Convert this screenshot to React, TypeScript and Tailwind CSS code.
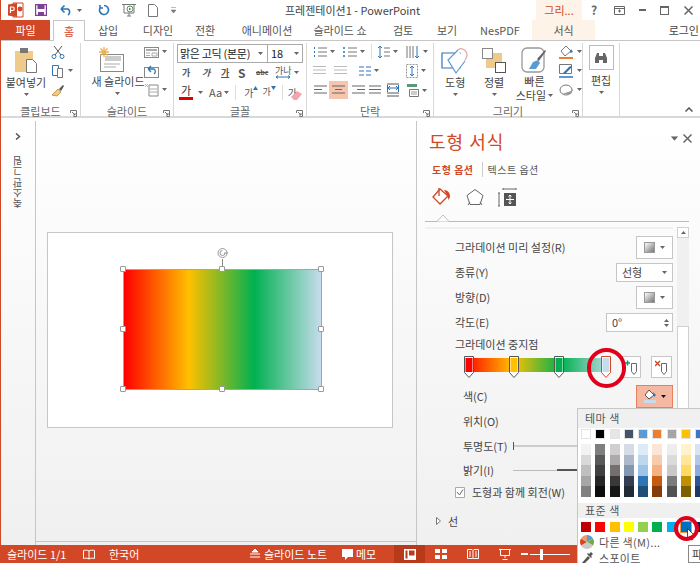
import type { ReactNode } from "react";

const Caret = ({ className = "", color = "#666" }: { className?: string; color?: string }) => (
  <svg width="5" height="3" viewBox="0 0 5 3" className={className}>
    <path d="M0 0h5L2.5 3z" fill={color} />
  </svg>
);

const Launcher = () => (
  <svg width="7" height="7" viewBox="0 0 7 7" className="absolute right-[3px] bottom-[1px]">
    <path d="M.5 3V.5H6.5V6.5H3.500M2 2l3 3M5 3v2H3" fill="none" stroke="#777" />
  </svg>
);

const Group = ({ label, width, children }: { label: string; width: string; children: ReactNode }) => (
  <div className={`relative flex flex-col h-[75px] border-r border-[#d8d8d8] ${width}`}>
    <div className="flex-1 min-h-0 flex">{children}</div>
    <div className="h-[14px] leading-[14px] text-center text-[11px] text-[#666]">{label}</div>
    <Launcher />
  </div>
);

const Lines = ({ w = 12, n = 3, color = "#666" }: { w?: number; n?: number; color?: string }) => (
  <>
    {Array.from({ length: n }).map((_, i) => (
      <rect key={i} x={0} y={2 + i * 3.5} width={w} height="1" fill={color} />
    ))}
  </>
);

const Mini = ({ children, arrow = false, w = 14 }: { children: ReactNode; arrow?: boolean; w?: number }) => (
  <div className="flex items-center gap-[3px] h-[19px]">
    <svg width={w} height="14" viewBox={`0 0 ${w} 14`}>
      {children}
    </svg>
    {arrow && <Caret />}
  </div>
);

const TABS: [string, string][] = [
  ["삽입", "w-[50px]"],
  ["디자인", "w-[50px]"],
  ["전환", "w-[44px]"],
  ["애니메이션", "w-[80px]"],
  ["슬라이드 쇼", "w-[66px]"],
  ["검토", "w-[60px]"],
  ["보기", "w-[28px]"],
  ["NesPDF", "w-[78px]"],
];

const THEME = ["#ffffff", "#000000", "#e7e6e6", "#44546a", "#5b9bd5", "#ed7d31", "#a5a5a5", "#ffc000", "#4472c4"];
const RAMPS = [
  ["#f2f2f2", "#d9d9d9", "#bfbfbf", "#a6a6a6", "#808080"],
  ["#7f7f7f", "#595959", "#404040", "#262626", "#0d0d0d"],
  ["#d0cece", "#aeaaaa", "#757070", "#3a3838", "#171616"],
  ["#d6dce5", "#adb9ca", "#8497b0", "#333f50", "#222a35"],
  ["#deebf7", "#bdd7ee", "#9dc3e6", "#2e75b6", "#1f4e79"],
  ["#fbe5d6", "#f8cbad", "#f4b183", "#c55a11", "#843c0c"],
  ["#ededed", "#dbdbdb", "#c9c9c9", "#7b7b7b", "#525252"],
  ["#fff2cc", "#ffe699", "#ffd966", "#bf9000", "#7f6000"],
  ["#dae3f3", "#b4c7e7", "#8faadc", "#2f5597", "#203864"],
];
const STANDARD = ["#c00000", "#ff0000", "#ffc000", "#ffff00", "#92d050", "#00b050", "#00b0f0", "#0070c0", "#002060"];

const GradBtn = () => (
  <div className="w-[37px] h-[23px] bg-white border border-[#c6c6c6] flex items-center justify-center gap-[5px]">
    <div className="w-[11px] h-[11px] border border-[#999] bg-linear-to-br from-white to-[#777]" />
    <Caret />
  </div>
);

const Row = ({ label, h, pl = "pl-[30px]", children }: { label: string; h: string; pl?: string; children?: ReactNode }) => (
  <div className={`flex items-center justify-between ${pl} ${h}`}>
    <span className="text-[11px] text-[#444] whitespace-nowrap">{label}</span>
    {children}
  </div>
);

const Stop = ({ left, fill, selected = false }: { left: string; fill: string; selected?: boolean }) => (
  <svg width="12" height="24" viewBox="0 0 12 24" className={`absolute top-[-3px] ${left}`}>
    <path d="M1.5 1.5H10.5V17.5L6 22.5L1.5 17.5Z" fill="#fff" stroke={selected ? "#d24726" : "#555"} />
    <rect x="2.500" y="3" width="7" height="14" fill={fill} />
  </svg>
);

export default function App() {
  return (
    <div className="relative w-[700px] h-[563px] overflow-hidden bg-white border-l border-[#d24726] font-['Noto_Sans_CJK_KR','Liberation_Sans',sans-serif] text-[#444] flex flex-col">
      {/* Title bar */}
      <div className="h-[20px] flex items-center relative shrink-0">
        <svg width="16" height="16" viewBox="0 0 16 16" className="ml-[7px]">
          <path d="M5 1h10v14H5z" fill="#fff" stroke="#d24726" />
          <path d="M0 2.500 9 1v14L0 13.500z" fill="#d24726" />
          <circle cx="12" cy="7" r="2.400" fill="#d24726" />
          <path d="M2.500 11V5h2a1.500 1.500 0 0 1 0 3.500h-2" fill="none" stroke="#fff" strokeWidth="1.200" />
        </svg>
        <svg width="12" height="12" viewBox="0 0 12 12" className="ml-[11px]">
          <path d="M.5.5h11v11H.5z" fill="#fff" stroke="#7d3f98" strokeWidth="1.400" />
          <path d="M2.500 1h7v4h-7zM3 8h6v3.500H3z" fill="#7d3f98" />
        </svg>
        <svg width="13" height="12" viewBox="0 0 13 12" className="ml-[13px]">
          <path d="M1 5 4.500 1.500M1 5l3.500 3.500M1 5h7a3.500 3.500 0 0 1 0 6" fill="none" stroke="#2e75b6" strokeWidth="1.600" />
        </svg>
        <Caret className="ml-[4px]" />
        <svg width="12" height="12" viewBox="0 0 12 12" className="ml-[16px]">
          <path d="M6 1.500a4.500 4.500 0 1 1-4 2.400M2 1v3h3" fill="none" stroke="#2e75b6" strokeWidth="1.600" />
        </svg>
        <svg width="14" height="14" viewBox="0 0 14 14" className="ml-[12px]">
          <path d="M0 1.500h14M2 1.500V10h10V1.500M5 13h4M7 10v3" fill="none" stroke="#777" />
          <circle cx="8" cy="6" r="3" fill="#fff" stroke="#5a8f5a" />
          <path d="M7 4.500v3l2.400-1.500z" fill="#5a8f5a" />
        </svg>
        <svg width="10" height="13" viewBox="0 0 10 13" className="ml-[12px]">
          <path d="M.5.5h6l3 3v9H.5z" fill="#fff" stroke="#777" />
        </svg>
        <svg width="5" height="6" viewBox="0 0 5 6" className="ml-[13px]">
          <path d="M0 .5h5M0 3h5L2.500 6z" fill="#777" stroke="#777" strokeWidth=".5" />
        </svg>
        <span className="ml-[109px] text-[11px] text-[#444] whitespace-nowrap">프레젠테이션1 - PowerPoint</span>
        <div className="ml-auto flex items-center h-full">
          <div className="w-[46px] h-full bg-[#fdf3e9] flex items-center justify-center text-[11px] text-[#d24726]">그리...</div>
          <div className="w-[24px] flex items-center justify-center text-[12px] font-bold text-[#666]">?</div>
          <svg width="11" height="9" viewBox="0 0 11 9" className="mr-[14px] ml-[8px]">
            <path d="M.5.5h10v8H.5zM.5 2.500h10M4 5h3M5.500 3.500v3" fill="none" stroke="#666" />
          </svg>
          <div className="w-[7px] h-[2px] bg-[#666] mr-[14px]" />
          <div className="w-[9px] h-[9px] border border-[#666] border-t-2 mr-[15px]" />
          <svg width="9" height="9" viewBox="0 0 9 9" className="mr-[7px]">
            <path d="M.5.5l8 8M8.500.5l-8 8" stroke="#666" strokeWidth="1.500" />
          </svg>
        </div>
      </div>

      {/* Tabs */}
      <div className="h-[21px] flex items-end shrink-0 relative border-b border-[#c6c6c6] text-[11px]">
        <div className="w-[49px] h-[20px] bg-[#d24726] text-white flex items-center justify-center">파일</div>
        <div className="ml-[3px] w-[32px] h-[21px] bg-white border border-b-0 border-[#c6c6c6] text-[#d24726] flex items-center justify-center mb-[-1px]">홈</div>
        <div className="flex items-center h-[20px] ml-[-2px]">
          {TABS.map(([t, w]) => (
            <div key={t} className={`${w} text-center whitespace-nowrap text-[#555]`}>{t}</div>
          ))}
        </div>
        <div className="w-[63px] h-[20px] bg-[#fdf3e9] flex items-center justify-center text-[#555] ml-[-7px]">서식</div>
        <span className="ml-auto mr-[1px] text-[#444] self-center whitespace-nowrap">로그인</span>
      </div>

      {/* Ribbon */}
      <div className="h-[77px] flex pt-[2px] shrink-0 border-b-2 border-[#d9d9d9] text-[11px] text-[#444]">
        <Group label="클립보드" width="w-[80px]">
          <div className="w-[50px] flex flex-col items-center pt-[5px]">
            <svg width="25" height="25" viewBox="0 0 25 25">
              <rect x="1" y="3" width="18" height="21" fill="#eecb8a" />
              <rect x="6" y="0" width="8" height="5" fill="#777" />
              <path d="M12.500 11.500h6l4 4v9h-10z" fill="#fff" stroke="#777" />
            </svg>
            <span className="leading-[13px] mt-[3px] whitespace-nowrap">붙여넣기</span>
            <Caret className="mt-[4px]" />
          </div>
          <div className="flex flex-col -mt-[1px]">
            <Mini>
              <path d="M3 1l7 9M11 1 4 10" stroke="#555" fill="none" />
              <circle cx="3" cy="11.500" r="2" fill="none" stroke="#2e75b6" />
              <circle cx="11" cy="11.500" r="2" fill="none" stroke="#2e75b6" />
            </Mini>
            <Mini arrow>
              <path d="M1.500 1.500h6v10h-6z" fill="#fff" stroke="#2e75b6" />
              <path d="M6.500 4.500h5v9h-5z" fill="#fff" stroke="#777" />
            </Mini>
            <Mini>
              <path d="M1 12 7 6l3 3-4 4z" fill="#eecb8a" stroke="#c79a45" />
              <path d="M8 6l4-4 1 1-3 5z" fill="#555" />
            </Mini>
          </div>
        </Group>

        <Group label="슬라이드" width="w-[93px]">
          <div className="w-[60px] flex flex-col items-center pt-[4px] shrink-0">
            <svg width="26" height="26" viewBox="0 0 26 26">
              <rect x="2.500" y="7.500" width="23" height="17" fill="#fff" stroke="#888" />
              <rect x="7" y="9" width="16" height="5" fill="#ccc" />
              <path d="M6 17h16M6 20h12" stroke="#aaa" />
              <path d="M6 0v10M1 5h10M2.500 1.500l7 7M9.500 1.500l-7 7" stroke="#edb04e" strokeWidth="1.300" />
            </svg>
            <span className="leading-[13px] mt-[2px] whitespace-nowrap ml-[14px]">새 슬라이드</span>
            <Caret className="mt-[4px] ml-[12px]" />
          </div>
          <div className="flex flex-col -mt-[1px] ml-[3px]">
            <Mini arrow w={15}>
              <rect x=".5" y="2.500" width="14" height="10" fill="#fff" stroke="#888" />
              <path d="M2 5h11" stroke="#aaa" strokeWidth="2" />
              <path d="M2 8h4M2 10.500h4M8 8h5v3H8z" stroke="#aaa" fill="none" />
            </Mini>
            <Mini w={15}>
              <rect x=".5" y="3.500" width="14" height="10" fill="#fff" stroke="#888" />
              <path d="M4 5H10a3 3 0 0 1 0 5M4 5l3-3M4 5l3 3" fill="none" stroke="#2e75b6" strokeWidth="1.300" />
            </Mini>
            <Mini arrow w={15}>
              <path d="M1 1l3 3M4 1 1 4" stroke="#edb04e" />
              <path d="M5 2h9v11H5z" fill="#fff" stroke="#888" />
              <path d="M6 6h7M6 9h7" stroke="#aaa" />
            </Mini>
          </div>
        </Group>

        <Group label="글꼴" width="w-[133px]">
          <div className="flex flex-col pl-[3px] pt-[1px]">
            <div className="flex h-[19px] w-[126px] border border-[#aaa] bg-white text-[#222]">
              <div className="w-[90px] flex items-center justify-between pl-[2px] pr-[4px] border-r border-[#aaa] whitespace-nowrap tracking-[-0.3px]">
                맑은 고딕 (본문)
                <Caret />
              </div>
              <div className="flex-1 flex items-center justify-between pl-[3px] pr-[3px]">
                18
                <Caret />
              </div>
            </div>
            <div className="flex items-center h-[19px] text-[9px] font-bold text-[#555] pl-[5px]">
              <span className="w-[20px]">가</span>
              <span className="w-[19px] italic">가</span>
              <span className="w-[17px] underline">가</span>
              <span className="w-[18px] text-[12px]">S</span>
              <span className="w-[19px] line-through text-[7px]">abc</span>
              <span className="text-[#555] font-normal leading-[9px] flex flex-col items-center">
                가나
                <svg width="14" height="4" viewBox="0 0 14 4">
                  <path d="M0 2h14M2 .5 0 2l2 1.500M12 .5 14 2l-2 1.500" fill="none" stroke="#2e75b6" />
                </svg>
              </span>
              <Caret className="ml-[2px]" />
            </div>
            <div className="flex items-center h-[20px] text-[11px] text-[#555]">
              <span className="w-[14px] ml-[2px] text-center border-b-[3px] border-[#e00000] leading-[13px] text-[#333]">가</span>
              <Caret className="ml-[5px]" />
              <span className="ml-[6px]">Aa</span>
              <Caret className="ml-[2px]" />
              <div className="w-px h-[15px] bg-[#ddd] ml-[6px]" />
              <span className="ml-[8px] text-[10px]">가</span>
              <svg width="5" height="4" viewBox="0 0 5 4" className="-mt-[9px]">
                <path d="M0 4 2.500 0 5 4z" fill="#2e75b6" />
              </svg>
              <span className="ml-[4px] text-[9px]">가</span>
              <svg width="5" height="4" viewBox="0 0 5 4" className="-mt-[9px]">
                <path d="M0 0h5L2.500 4z" fill="#2e75b6" />
              </svg>
              <div className="w-px h-[15px] bg-[#ddd] ml-[6px]" />
              <span className="ml-[5px] text-[10px]">가</span>
              <svg width="11" height="9" viewBox="0 0 11 9" className="-ml-[6px] mt-[6px]">
                <path d="M0 6 6 0l5 3-5 6H3z" fill="#f3a4ad" />
              </svg>
            </div>
          </div>
        </Group>

        <Group label="단락" width="w-[127px]">
          <div className="flex flex-col pl-[6px] w-full -mt-[1px]">
            <div className="flex items-center h-[19px]">
              <Mini arrow>
                <path d="M1 3h1M1 7h1M1 11h1" stroke="#2e75b6" strokeWidth="2" />
                <path d="M5 3h9M5 7h9M5 11h9" stroke="#777" />
              </Mini>
              <div className="ml-[8px]">
                <Mini arrow>
                  <path d="M1 2v2M1 6v2M1 10v2" stroke="#2e75b6" strokeWidth="1.500" />
                  <path d="M5 3h9M5 7h9M5 11h9" stroke="#777" />
                </Mini>
              </div>
              <div className="w-px h-[15px] bg-[#ddd] ml-[6px]" />
              <div className="ml-[5px]">
                <Mini arrow w={13}>
                  <path d="M3 1v12M1 3l2-2 2 2M1 11l2 2 2-2" fill="none" stroke="#2e75b6" />
                  <path d="M7 3h6M7 7h6M7 11h6" stroke="#777" />
                </Mini>
              </div>
              <div className="ml-[8px]">
                <Mini arrow w={14}>
                  <path d="M1 1v12M4 1v12M7 1v12" stroke="#777" />
                  <path d="M11 1v12M9 11l2 2 2-2" fill="none" stroke="#2e75b6" />
                </Mini>
              </div>
            </div>
            <div className="flex items-center h-[19px]">
              <Mini w={14}>
                <Lines w={13} color="#bbb" />
              </Mini>
              <div className="ml-[7px]">
                <Mini w={14}>
                  <Lines w={13} color="#bbb" />
                </Mini>
              </div>
              <div className="ml-[11px]">
                <Mini arrow w={12}>
                  <path d="M0 3h5M7 3h5M0 7h5M7 7h5M0 11h5M7 11h5" stroke="#2e75b6" />
                </Mini>
              </div>
              <div className="ml-[27px]">
                <Mini arrow w={12}>
                  <path d="M.5.5h11v13H.5z" fill="none" stroke="#999" strokeDasharray="2 1" />
                  <path d="M6 2v10M4 4l2-2 2 2M4 10l2 2 2-2" fill="none" stroke="#2e75b6" />
                </Mini>
              </div>
            </div>
            <div className="flex items-center h-[20px]">
              <div className="w-[16px] h-[18px] flex items-center pl-[1px]">
                <svg width="13" height="12" viewBox="0 0 13 12"><path d="M0 2h13M0 5.500h8M0 9h13" stroke="#666" /></svg>
              </div>
              <div className="w-[19px] h-[18px] bg-[#f7c4ad] flex items-center justify-center">
                <svg width="13" height="12" viewBox="0 0 13 12"><path d="M0 2h13M3 5.500h7M0 9h13" stroke="#666" /></svg>
              </div>
              <div className="w-[20px] flex justify-center">
                <svg width="13" height="12" viewBox="0 0 13 12"><path d="M0 2h13M5 5.500h8M0 9h13" stroke="#666" /></svg>
              </div>
              <div className="w-[14px] flex justify-center">
                <svg width="12" height="12" viewBox="0 0 12 12"><path d="M0 2h12M0 5.500h12M0 9h12" stroke="#666" /></svg>
              </div>
              <svg width="12" height="14" viewBox="0 0 12 14" className="ml-[5px]">
                <path d="M0 1h12M0 13h12M0 10h12" stroke="#555" />
                <path d="M1 5h10M1 5l2-2M1 5l2 2M11 5 9 3M11 5 9 7M.5 2v7M11.500 2v7" fill="none" stroke="#2e75b6" />
              </svg>
              <div className="ml-[7px]">
                <Mini arrow w={13}>
                  <path d="M1 1h10v3H1z" fill="#5a9a78" />
                  <path d="M3.500 6.500h9v7h-9z" fill="#fff" stroke="#777" />
                  <path d="M5 9h6M5 11h6" stroke="#999" />
                </Mini>
              </div>
            </div>
          </div>
        </Group>

        <Group label="그리기" width="w-[149px]">
          <div className="w-[44px] flex flex-col items-center pt-[5px]">
            <svg width="28" height="27" viewBox="0 0 28 27">
              <path d="M1 5h18v15H1z" fill="#fff" stroke="#2e75b6" strokeWidth="1.200" />
              <path d="M17 2c3-3 9 0 9 5 0 5-6 9-7 11" fill="none" stroke="#e8a3a3" strokeWidth="1.200" />
              <path d="M17 2 7 12l8 13 9-12" fill="#fff" stroke="#5b9bd5" strokeWidth="1.200" />
            </svg>
            <span className="leading-[13px] mt-[1px]">도형</span>
            <Caret className="mt-[4px]" />
          </div>
          <div className="w-[37px] flex flex-col items-center pt-[5px]">
            <svg width="24" height="26" viewBox="0 0 24 26">
              <rect x=".5" y=".5" width="10" height="10" fill="#fff" stroke="#888" />
              <rect x="11" y="5" width="9" height="9" fill="#eecb8a" />
              <rect x="4" y="11" width="9" height="9" fill="#eecb8a" />
              <rect x="13.500" y="14.500" width="10" height="10" fill="#fff" stroke="#555" />
            </svg>
            <span className="leading-[13px] mt-[2px]">정렬</span>
            <Caret className="mt-[4px]" />
          </div>
          <div className="w-[47px] flex flex-col items-center pt-[4px]">
            <svg width="26" height="27" viewBox="0 0 26 27">
              <rect x="1" y="1" width="22" height="24" rx="5" fill="#fff" stroke="#999" strokeWidth="1.300" />
              <path d="M8 22l4-7 5-2 2 3-4 6z" fill="#5b9bd5" />
              <path d="M16 12l8-9 1 1-7 10z" fill="#666" />
            </svg>
            <span className="leading-[13px] mt-[1px]">빠른</span>
            <span className="leading-[14px] flex items-center gap-[2px] whitespace-nowrap">스타일<Caret /></span>
          </div>
          <div className="flex flex-col -mt-[1px] ml-[2px]">
            <Mini arrow w={15}>
              <path d="M7 1 2 6l4 5 6-5z" fill="#fff" stroke="#777" />
              <path d="M12 4l2 3-3 1z" fill="#2e75b6" />
              <rect x="0" y="12" width="14" height="2" fill="#ed7d31" />
            </Mini>
            <Mini arrow w={15}>
              <path d="M.5.5h12v9H.5z" fill="none" stroke="#777" />
              <path d="M4 9 11 2l2 1-7 7z" fill="#2e75b6" />
              <rect x="0" y="12" width="14" height="2" fill="#5b9bd5" />
            </Mini>
            <Mini arrow w={15}>
              <ellipse cx="7" cy="7" rx="6" ry="5" fill="#fff" stroke="#777" />
              <path d="M3 11h9l2-5-2 2z" fill="#999" />
            </Mini>
          </div>
        </Group>

        <div className="w-[37px] h-[75px] flex flex-col items-center border-r border-[#d8d8d8]">
          <div className="w-[25px] h-[25px] mt-[2px] border border-[#bbb] flex items-center justify-center">
            <svg width="14" height="12" viewBox="0 0 14 12">
              <path d="M1 11V6l2-5h2v10zM13 11V6l-2-5H9v10zM5 4h4v4H5z" fill="#666" />
            </svg>
          </div>
          <span className="leading-[13px] mt-[4px]">편집</span>
          <Caret className="mt-[4px]" />
        </div>
        <div className="flex-1 flex items-end justify-end pr-[7px] pb-[4px]">
          <svg width="8" height="5" viewBox="0 0 8 5">
            <path d="M.5 4.500 4 1l3.500 3.500" fill="none" stroke="#555" strokeWidth="1.500" />
          </svg>
        </div>
      </div>

      {/* Main */}
      <div className="flex-1 min-h-0 flex pt-[3px] bg-linear-to-b from-white to-[#f0f0f0]">
        <div className="w-[35px] shrink-0 border-r border-[#c6c6c6] flex flex-col items-center">
          <svg width="6" height="7" viewBox="0 0 6 7" className="mt-[12px]">
            <path d="M1 .5 4.500 3.500 1 6.500" fill="none" stroke="#555" strokeWidth="1.500" />
          </svg>
          <div className="mt-[16px] [writing-mode:vertical-rl] rotate-180 text-[10px] text-[#555] whitespace-nowrap leading-[12px]">축소판 그림</div>
        </div>

        {/* Canvas */}
        <div className="w-[380px] shrink-0 flex flex-col border-b border-[#c6c6c6] mb-[3px]">
          <div className="relative mt-[111px] ml-[11px] w-[346px] h-[196px] bg-white border border-[#c6c6c6]">
            <div className="absolute left-[75px] top-[36px] w-[199px] h-[121px] border border-[#9aa5b5] bg-[linear-gradient(90deg,#ff0000_0%,#ffc000_33%,#00b050_66%,#c5dcec_100%)]" />
            <svg width="12" height="12" viewBox="0 0 12 12" className="absolute left-[169px] top-[14px]">
              <circle cx="5.500" cy="6" r="4.500" fill="#fff" stroke="#999" />
              <path d="M5.500 3.500a2.500 2.500 0 1 0 2.500 2.500M7 6h4" fill="none" stroke="#999" />
            </svg>
            <div className="absolute left-[174px] top-[26px] w-px h-[10px] bg-[#888]" />
            {["left-[72px] top-[33px]", "left-[171px] top-[33px]", "left-[270px] top-[33px]", "left-[72px] top-[93px]", "left-[270px] top-[93px]", "left-[72px] top-[153px]", "left-[171px] top-[153px]", "left-[270px] top-[153px]"].map((p) => (
              <div key={p} className={`absolute ${p} w-[6px] h-[6px] bg-white border border-[#999] rounded-[1px]`} />
            ))}
          </div>
        </div>

        {/* Format pane */}
        <div className="flex-1 min-w-0 border-l border-[#c6c6c6] flex flex-col">
          <div className="flex justify-between pl-[12px] pr-[8px] h-[37px] pt-[5px]">
            <span className="text-[18px] leading-[30px] text-[#d24726] tracking-[1px]">도형 서식</span>
            <div className="flex items-center gap-[6px] h-[20px] pt-[4px]">
              <Caret className="scale-150" />
              <svg width="9" height="9" viewBox="0 0 9 9">
                <path d="M.5.5l8 8M8.500.5l-8 8" stroke="#666" strokeWidth="1.500" />
              </svg>
            </div>
          </div>
          <div className="flex items-center h-[22px] pl-[15px] text-[10px]">
            <span className="text-[#d24726] font-bold pr-[8px] border-r border-[#ccc] tracking-[0.5px]">도형 옵션</span>
            <span className="pl-[5px] text-[#555] tracking-[0.5px]">텍스트 옵션</span>
          </div>
          <div className="flex items-center h-[26px] mt-[4px] pl-[15px] gap-[14px]">
            <svg width="20" height="20" viewBox="0 0 20 20">
              <path d="M8 2 1 10l7 7 8-8z" fill="#fff" stroke="#d24726" strokeWidth="1.300" />
              <path d="M7 1v8" stroke="#d24726" strokeWidth="1.300" />
              <path d="M12 3c4 0 6 3 6 7l-1.500 3-1-4z" fill="#d24726" />
            </svg>
            <svg width="18" height="18" viewBox="0 0 18 18">
              <path d="M9 1.500 17 7.500l-3 9H4l-3-9zM4 14l-2 3M14 14l2 3" fill="#fff" stroke="#666" />
            </svg>
            <svg width="19" height="19" viewBox="0 0 19 19">
              <path d="M5 1h13M5 0v2M18 0v2M1 5v13M0 5h2M0 18h2" stroke="#666" fill="none" />
              <rect x="6" y="5" width="12" height="13" fill="#555" />
              <path d="M12 7v9M8 11.500h8M10.500 8.500 12 7l1.500 1.500M10.500 14.500 12 16l1.500-1.500" stroke="#fff" fill="none" />
            </svg>
          </div>
          <div className="relative h-[12px] mx-[8px] border-b border-[#bbb] shrink-0 mr-[11px]">
            <svg width="14" height="8" viewBox="0 0 14 8" className="absolute left-[11px] bottom-[-1px]">
              <path d="M0 7.500h1L7 1l6 6.500h1" fill="#fff" stroke="#bbb" />
            </svg>
          </div>

          <div className="flex-1 min-h-0 flex mt-[5px]">
            <div className="w-[248px] ml-[8px] shrink-0 border-t-2 border-[#f0f0f0] flex flex-col pt-[6px]">
              <Row label="그라데이션 미리 설정(R)" h="h-[25px]"><GradBtn /></Row>
              <Row label="종류(Y)" h="h-[25px]">
                <div className="w-[57px] h-[19px] bg-white border border-[#c6c6c6] flex items-center justify-between px-[5px]">
                  <span className="text-[11px]">선형</span>
                  <Caret />
                </div>
              </Row>
              <Row label="방향(D)" h="h-[25px]"><GradBtn /></Row>
              <Row label="각도(E)" h="h-[25px]">
                <div className="w-[67px] h-[19px] bg-white border border-[#c6c6c6] flex items-center justify-between pl-[5px] pr-[3px]">
                  <span className="text-[11px]">0°</span>
                  <div className="flex flex-col gap-[2px]">
                    <Caret className="rotate-180" />
                    <Caret />
                  </div>
                </div>
              </Row>
              <Row label="그라데이션 중지점" h="h-[18px]" />
              <div className="h-[26px] flex items-center pl-[39px] relative">
                <div className="relative w-[147px] h-[14px] mb-[2px] bg-[linear-gradient(90deg,#ff0000_0%,#ffc000_33%,#00b050_66%,#c5dcec_100%)]">
                  <Stop left="left-[-1px]" fill="#ff0000" />
                  <Stop left="left-[44px]" fill="#ffc000" />
                  <Stop left="left-[89px]" fill="#00b050" />
                  <Stop left="left-[136px]" fill="#c5dcec" selected />
                </div>
                <div className="ml-[11px] mt-[2px] w-[19px] h-[22px] bg-white border border-[#c6c6c6] flex items-center justify-center">
                  <svg width="13" height="15" viewBox="0 0 13 15">
                    <path d="M6.500 3.500h5v8l-2.500 3-2.500-3z" fill="#fff" stroke="#666" />
                    <path d="M0 3h5M2.500.5v5" stroke="#00a070" strokeWidth="1.500" />
                  </svg>
                </div>
                <div className="ml-[10px] mt-[2px] w-[21px] h-[22px] bg-white border border-[#c6c6c6] flex items-center justify-center">
                  <svg width="13" height="15" viewBox="0 0 13 15">
                    <path d="M6.500 3.500h5v8l-2.500 3-2.500-3z" fill="#fff" stroke="#666" />
                    <path d="M0 1l5 5M5 1 0 6" stroke="#d24726" strokeWidth="1.500" />
                  </svg>
                </div>
              </div>
              <div className="mt-[5px]">
                <Row label="색(C)" h="h-[24px]" pl="pl-[38px]">
                  <div className="w-[37px] h-[23px] bg-[#f5b9a3] border border-[#e8805c] flex items-center justify-center gap-[3px]">
                    <svg width="15" height="14" viewBox="0 0 15 14">
                      <path d="M6 1 2 6l4 4 5-4z" fill="#fff" stroke="#555" />
                      <path d="M10 3l3 3-2 2z" fill="#2e75b6" />
                      <rect x="1" y="11" width="12" height="3" fill="#c5dcec" />
                    </svg>
                    <Caret color="#111" />
                  </div>
                </Row>
              </div>
              <Row label="위치(O)" h="h-[26px]" pl="pl-[38px]" />
              <div className="flex items-center h-[24px] pl-[38px]">
                <span className="text-[11px] w-[50px] whitespace-nowrap">투명도(T)</span>
                <div className="w-px h-[8px] bg-[#555]" />
                <div className="flex-1 h-[2px] bg-[#ccc]" />
              </div>
              <div className="flex items-center h-[24px] pl-[38px]">
                <span className="text-[11px] w-[50px] whitespace-nowrap">밝기(I)</span>
                <div className="w-[44px] h-px bg-[#bbb]" />
                <div className="flex-1 h-[2px] bg-[#555]" />
              </div>
              <div className="flex items-center h-[20px] pl-[30px] gap-[7px]">
                <svg width="10" height="11" viewBox="0 0 10 11">
                  <path d="M.5.500h9v10h-9z" fill="#fff" stroke="#aaa" />
                  <path d="M2 5l2.500 3L8 2.500" fill="none" stroke="#666" />
                </svg>
                <span className="text-[11px] whitespace-nowrap">도형과 함께 회전(W)</span>
              </div>
              <div className="flex items-center h-[20px] mt-[9px] pl-[11px] gap-[7px]">
                <svg width="5" height="8" viewBox="0 0 5 8">
                  <path d="M.5.500 4.500 4 .5 7.500z" fill="#fff" stroke="#777" />
                </svg>
                <span className="text-[11px]">선</span>
              </div>
            </div>
            <div className="w-[12px] ml-[4px] bg-[#f0f0f0] flex flex-col shrink-0">
              <div className="h-[11px] bg-white border border-[#d0d0d0] flex items-center justify-center shrink-0">
                <Caret className="rotate-180" />
              </div>
              <div className="mt-[88px] flex-1 bg-white border border-[#d0d0d0]" />
            </div>
          </div>
        </div>
      </div>

      {/* Status bar */}
      <div className="h-[18px] shrink-0 bg-[#d24726] text-white text-[11px] flex items-center whitespace-nowrap">
        <span className="ml-[6px] w-[76px]">슬라이드 1/1</span>
        <svg width="12" height="11" viewBox="0 0 12 11">
          <path d="M6 2C5 1 2 1 .5 1.500v8C2 9 5 9 6 10c1-1 4-1 5.500-.5v-8C10 1 7 1 6 2zM6 2v8" fill="none" stroke="#fff" />
        </svg>
        <span className="ml-[14px] w-[141px]">한국어</span>
        <svg width="10" height="11" viewBox="0 0 10 11">
          <path d="M5 0 2 3h6zM0 5h10M0 8h10" fill="#fff" stroke="#fff" />
        </svg>
        <span className="ml-[4px] w-[74px]">슬라이드 노트</span>
        <svg width="11" height="11" viewBox="0 0 11 11" className="ml-[4px]">
          <path d="M0 0h11v8H6l-3 3V8H0z" fill="#fff" />
        </svg>
        <span className="ml-[3px] w-[38px]">메모</span>
        <div className="w-[31px] h-full bg-[#b83a1c] flex items-center justify-center">
          <svg width="12" height="11" viewBox="0 0 12 11">
            <path d="M0 0h12v11H0z" fill="#fff" />
            <path d="M1.500 1.500h2v8h-2zM5 1.500h5.500v5H5z" fill="#b83a1c" />
          </svg>
        </div>
        <svg width="12" height="10" viewBox="0 0 12 10" className="ml-[10px]">
          <path d="M0 0h5v4H0zM7 0h5v4H7zM0 6h5v4H0zM7 6h5v4H7z" fill="#fff" />
        </svg>
        <svg width="12" height="10" viewBox="0 0 12 10" className="ml-[20px]">
          <path d="M.5.500h4.500l1 1 1-1h4.500v9H7l-1 .5-1-.5H.5zM6 1.500v8M2 3h2M2 5h2M2 7h2M8 3h2M8 5h2M8 7h2" fill="none" stroke="#fff" />
        </svg>
        <svg width="12" height="11" viewBox="0 0 12 11" className="ml-[20px]">
          <path d="M0 .500h12M1.500.500h9v6h-9zM6 7v2M3.500 10.500h5" fill="none" stroke="#fff" />
        </svg>
        <div className="ml-[10px] w-[7px] h-[2px] bg-white" />
        <div className="relative ml-[2px] w-[40px] h-px bg-white">
          <div className="absolute left-[10px] -top-[5px] w-[3px] h-[11px] bg-white" />
        </div>
      </div>

      {/* Colour menu */}
      <div className="absolute left-[576px] top-[408px] w-[124px] h-[155px] bg-white border border-[#c6c6c6] border-r-0 border-b-0 overflow-hidden flex flex-col text-[11px] text-[#555]">
        <div className="h-[19px] bg-[#f0f0f0] pl-[7px] flex items-center tracking-[0.5px] shrink-0">테마 색</div>
        <div className="flex gap-[4.300px] pl-[3px] mt-[1px] shrink-0">
          {THEME.map((c) => (
            <div key={c} className="w-[10px] h-[10px] shrink-0 border border-[#e2e2e2]" style={{ backgroundColor: c }} />
          ))}
        </div>
        <div className="flex gap-[4.300px] pl-[3px] mt-[5px] shrink-0">
          {RAMPS.map((r, i) => (
            <div key={i} className="w-[10px] shrink-0 flex flex-col">
              {r.map((c) => (
                <div key={c} className="h-[10.600px]" style={{ backgroundColor: c }} />
              ))}
            </div>
          ))}
        </div>
        <div className="h-[15px] mt-[6px] bg-[#f0f0f0] pl-[7px] flex items-center tracking-[0.5px] shrink-0">표준 색</div>
        <div className="flex gap-[4.300px] pl-[3px] mt-[4px] shrink-0">
          {STANDARD.map((c) => (
            <div key={c} className="w-[10px] h-[10px] shrink-0" style={{ backgroundColor: c }} />
          ))}
        </div>
        <div className="flex items-center h-[16px] mt-[2px] pl-[2px] gap-[5px] shrink-0">
          <svg width="14" height="14" viewBox="0 0 14 14">
            <path d="M7 7V0a7 7 0 0 1 6 3.500z" fill="#5b9bd5" />
            <path d="M7 7l6-3.500A7 7 0 0 1 13 10.500z" fill="#70ad47" />
            <path d="M7 7l6 3.500A7 7 0 0 1 1 10.500z" fill="#c9c9c9" />
            <path d="M7 7l-6 3.500A7 7 0 0 1 1 3.500z" fill="#d24726" />
            <path d="M7 7 1 3.500A7 7 0 0 1 7 0z" fill="#ed9a6d" />
          </svg>
          <span className="tracking-[0.3px]">다른 색(M)...</span>
        </div>
        <div className="flex items-center h-[16px] pl-[2px] gap-[5px] shrink-0">
          <svg width="14" height="14" viewBox="0 0 14 14">
            <path d="M1 13 8 5l2 2-7 7zM9 3l2-2 2 2-2 2 1 1-1 1-4-4 1-1z" fill="#555" />
          </svg>
          <span className="tracking-[0.3px]">스포이트</span>
        </div>
      </div>

      {/* Selected swatch, cursor, tooltip */}
      <div className="absolute left-[679px] top-[521px] w-[12px] h-[12px] border border-[#f0a040]" />
      <svg width="9" height="13" viewBox="0 0 9 13" className="absolute left-[686px] top-[528px]">
        <path d="M.5.500v10l2.500-2 1.500 3.500 1.500-.7L4.500 8H8z" fill="#fff" stroke="#222" strokeWidth=".8" />
      </svg>
      <div className="absolute left-[687px] top-[545px] w-[20px] h-[18px] bg-white border border-[#888] text-[11px] pl-[3px] leading-[16px]">파</div>

      {/* Red call-outs */}
      <div className="absolute left-[586px] top-[348px] w-[39px] h-[40px] rounded-full border-[4px] border-[#e0001b]" />
      <div className="absolute left-[673px] top-[516px] w-[25px] h-[25px] rounded-full border-[4px] border-[#e0001b]" />
    </div>
  );
}
